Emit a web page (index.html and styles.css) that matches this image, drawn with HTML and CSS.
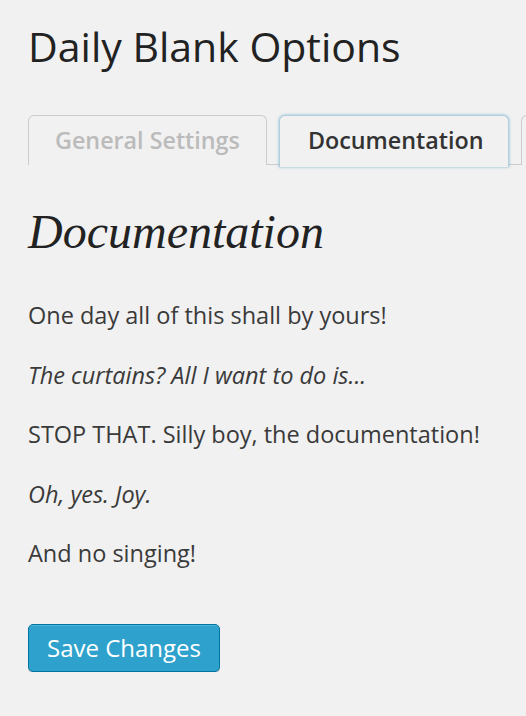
FILE: index.html
```html
<!DOCTYPE html>
<html lang="en">
<head>
<meta charset="utf-8">
<title>Daily Blank Options</title>
<link rel="stylesheet" href="styles.css">
</head>
<body>
<div class="wrap">
  <h1 class="page-title">Daily Blank Options</h1>
  <nav class="tabs">
    <a class="tab" href="#">General Settings</a>
    <a class="tab tab-active" href="#">Documentation</a>
    <a class="tab" href="#">Misc</a>
  </nav>
  <h2 class="section-title">Documentation</h2>
  <p class="text">One day all of this shall by yours!</p>
  <p class="text"><em>The curtains? All I want to do is...</em></p>
  <p class="text">STOP THAT. Silly boy, the documentation!</p>
  <p class="text"><em>Oh, yes. Joy.</em></p>
  <p class="text">And no singing!</p>
  <div class="actions">
    <button class="btn-primary" type="button">Save Changes</button>
  </div>
</div>
</body>
</html>
```

FILE: styles.css
```css
html, body {
  margin: 0;
  padding: 0;
  background: #f1f1f1;
  overflow: hidden;
}
body {
  font-family: "Open Sans", "Liberation Sans", sans-serif;
  color: #3a3a3a;
}
.wrap {
  padding: 21px 0 0 28px;
}
.page-title {
  margin: 0;
  font-size: 41px;
  line-height: 50px;
  font-weight: 400;
  color: #222;
}
.tabs {
  margin-top: 44px;
  display: flex;
  gap: 12px;
  border-bottom: 1px solid #ccc;
  height: 49px;
  white-space: nowrap;
}
.tab {
  display: block;
  flex: none;
  box-sizing: border-box;
  height: 50px;
  padding: 6px 26px 7px;
  line-height: 36px;
  font-size: 23.3px;
  font-weight: 600;
  color: #bbb;
  text-decoration: none;
  border: 1px solid #ccc;
  border-bottom: none;
  border-radius: 6px 6px 0 0;
  background: #f1f1f1;
}
.tab-active {
  color: #333;
  border-color: #b3cfdd;
  box-shadow: 0 0 3px rgba(30, 140, 190, 0.55);
  position: relative;
  z-index: 1;
  height: 52px;
  padding-left: 28px;
  padding-right: 25px;
}
.section-title {
  margin: 39px 0 0;
  font-family: "Liberation Serif", "Times New Roman", serif;
  font-style: italic;
  font-weight: 400;
  font-size: 48px;
  line-height: 56px;
  color: #222;
}
.text {
  margin: 0 0 23.5px;
  font-size: 23.5px;
  line-height: 36px;
}
.text:first-of-type {
  margin-top: 37px;
}
.text em {
  font-style: italic;
}
.actions {
  margin-top: 53px;
}
.btn-primary {
  display: block;
  height: 48px;
  padding: 0 18px;
  font-family: "Open Sans", "Liberation Sans", sans-serif;
  font-size: 24px;
  font-weight: 500;
  line-height: 44px;
  color: #fff;
  background: #2ea2cc;
  border: 1px solid #0074a2;
  border-radius: 5px;
  box-shadow: inset 0 1px 0 rgba(120, 200, 230, 0.5), 0 2px 0 rgba(0, 0, 0, 0.12);
  cursor: pointer;
}
```
